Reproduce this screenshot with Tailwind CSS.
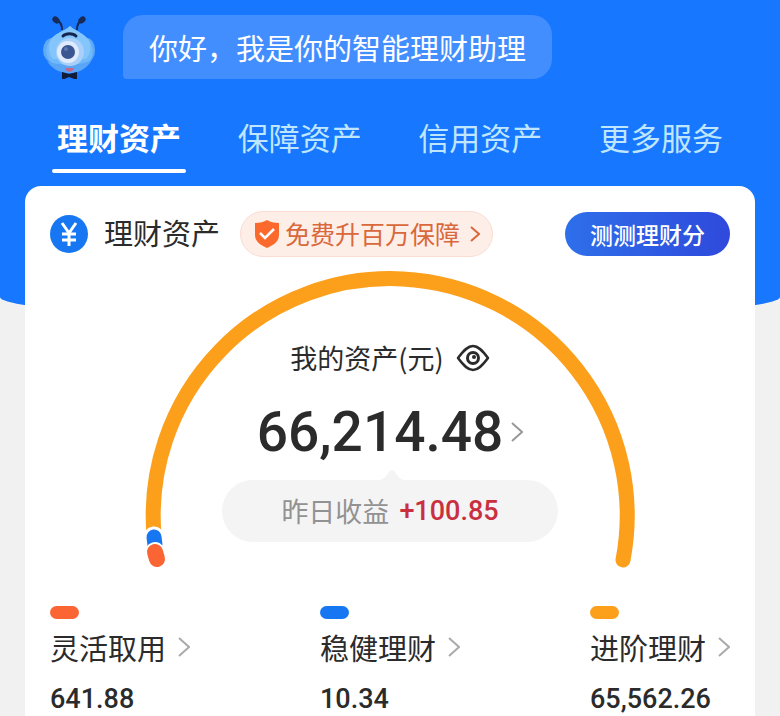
<!DOCTYPE html>
<html lang="zh-CN">
<head>
  <meta charset="UTF-8" />
  <meta name="viewport" content="width=device-width, initial-scale=1.0" />
  <title>理财资产</title>
  <script src="https://cdn.jsdelivr.net/npm/@tailwindcss/browser@4"></script>
</head>
<body class="bg-[#f1f1f1] text-[#2b2b2b] font-['Noto_Sans_CJK_SC',sans-serif]">

  <header class="h-80 bg-[#1777ff] rounded-b-[50%_23px] pt-[15px]">
    <div class="flex items-center pl-[42px] gap-[26px]">
      <!-- assistant mascot -->
      <svg class="w-[55px] h-16 shrink-0" viewBox="0 0 55 64" fill="none">
        <path d="M20 15C20 9 18 6 14 5" stroke="#182a55" stroke-width="2" />
        <path d="M35 15C35 9 37 6 41 5" stroke="#182a55" stroke-width="2" />
        <ellipse cx="14" cy="5" rx="4" ry="3" transform="rotate(40 14 5)" fill="#182a55" />
        <ellipse cx="40" cy="5" rx="4" ry="3" transform="rotate(-40 40 5)" fill="#182a55" />
        <ellipse cx="10" cy="35" rx="9" ry="12" fill="#5fa9f5" />
        <ellipse cx="45" cy="35" rx="8" ry="12" fill="#5fa9f5" />
        <path d="M28 11C33 16 40 17 46 24C54 34 51 45 43 51C34 58 22 58 13 51C4 45 1 34 9 24C15 17 23 16 28 11Z" fill="#6fb8f9" />
        <path d="M28 11C33 16 40 17 46 24C50 30 49 38 44 44H11C6 38 6 30 9 24C15 17 23 16 28 11Z" fill="#84c6fb" />
        <path d="M5 46C16 51 39 51 50 45C43 56 34 58 28 58S12 57 5 46Z" fill="#5aa5f6" />
        <path d="M21 21C24 18 31 18 34 21" stroke="#14264f" stroke-width="3" stroke-linecap="round" />
        <circle cx="28" cy="37" r="14" fill="#a9d0fa" />
        <circle cx="26" cy="37" r="11" fill="#dfebfc" />
        <circle cx="26" cy="37" r="7" fill="#3b5590" />
        <circle cx="24" cy="34" r="2" fill="#5c78b0" />
        <path d="M23 53H32C31 58 24 58 23 53Z" fill="#c7668a" />
        <path d="M20 57L27 59L35 57V65L27 62L20 65Z" fill="#141c35" />
      </svg>
      <p class="h-16 px-[26px] rounded-[20px] rounded-bl-[4px] bg-[#438eff] text-white text-[29px] leading-16 whitespace-nowrap">你好，我是你的智能理财助理</p>
    </div>

    <nav class="flex justify-between px-[52px] mt-[34px] text-[31px] leading-12 text-[#bfe6ff]">
      <a href="#" class="w-[134px] text-center font-bold text-white">理财资产<span class="block h-1 mt-2 rounded-full bg-white"></span></a>
      <a href="#" class="w-[134px] text-center">保障资产</a>
      <a href="#" class="w-[134px] text-center">信用资产</a>
      <a href="#" class="w-[134px] text-center">更多服务</a>
    </nav>
  </header>

  <main class="relative mx-[25px] -mt-[134px] px-[25px] pt-[25px] pb-4 rounded-t-2xl bg-white">
    <div class="flex items-center">
      <svg class="w-[38px] h-[38px]" viewBox="0 0 38 38" fill="none">
        <circle cx="19" cy="19" r="19" fill="#1777f2" />
        <path d="M12 8L19 18L26 8M19 18V31M12 19H26M12 25H26" stroke="#fff" stroke-width="3" />
      </svg>
      <h1 class="ml-4 pb-1 text-[29px] leading-10">理财资产</h1>
      <a href="#" class="flex items-center ml-5 h-[46px] pl-[14px] pr-3 rounded-full border border-[#fbdcd2] bg-[#feeee8] text-[#d9683a] text-[25px]">
        <svg class="w-6 h-7 mr-[6px]" viewBox="0 0 24 28" fill="none">
          <path d="M12 0C15 2 19 3 24 3V15C24 21 19 25 12 28C5 25 0 21 0 15V3C5 3 9 2 12 0Z" fill="#fb6a2c" />
          <path d="M5 13L10 18L19 9" stroke="#fff" stroke-width="2.500" />
        </svg>
        免费升百万保障
        <svg class="w-[10px] h-4 ml-[10px]" viewBox="0 0 10 16" fill="none" stroke="#d9683a" stroke-width="2"><path d="M1 1L9 8L1 15" /></svg>
      </a>
      <button type="button" class="ml-auto h-11 px-[25px] rounded-full bg-linear-to-r from-[#2e6fea] to-[#2f49dc] text-white text-[23px] font-medium">测测理财分</button>
    </div>

    <section class="relative w-[490px] h-[300px] mx-auto mt-[13px] pt-[68px] flex flex-col items-center">
      <!-- share of each asset class along the arc -->
      <svg class="absolute inset-0" viewBox="0 0 490 300" fill="none" stroke-linecap="round">
        <path d="M9 265A237 237 0 1 1 478 290" stroke="#fc9f1b" stroke-width="15" />
        <path d="M9 267L10 275" stroke="#fff" stroke-width="21" />
        <path d="M9 267L10 275" stroke="#1777f2" stroke-width="15" />
        <path d="M10 282L12 289" stroke="#fff" stroke-width="20" />
        <path d="M10 282L12 289" stroke="#fb6534" stroke-width="16" />
      </svg>
      <div class="relative flex items-center gap-3 text-[27px] leading-10">
        我的资产(元)
        <button type="button" aria-label="隐藏金额">
          <svg class="w-[34px] h-7" viewBox="0 0 34 28" fill="none" stroke="#2b2b2b">
            <path d="M2 14C8 6 12 2 17 2S26 6 32 14C26 22 22 26 17 26S8 22 2 14Z" stroke-width="2.500" stroke-linejoin="round" />
            <circle cx="17" cy="14" r="5.500" stroke-width="3" />
            <circle cx="18" cy="13" r="2" fill="#2b2b2b" stroke="none" />
          </svg>
        </button>
      </div>
      <a href="#" class="relative flex items-center gap-2 mt-[14px] text-[55px] leading-[80px] font-medium font-[Roboto,sans-serif]">
        66,214.48
        <svg class="w-3 h-5" viewBox="0 0 12 20" fill="none" stroke="#999" stroke-width="2"><path d="M1 1L11 10L1 19" /></svg>
      </a>
      <div class="relative flex items-center justify-center gap-[10px] w-[336px] h-[62px] mt-2 rounded-full bg-[#f4f4f4] text-[27px] shrink-0">
        <svg class="absolute -top-[10px] left-[158px] w-6 h-[10px]" viewBox="0 0 24 10" fill="#f4f4f4"><path d="M0 10C6 9 9 0 12 0S18 9 24 10Z" /></svg>
        <span class="text-[#929292]">昨日收益</span>
        <span class="text-[#c9303f] font-medium font-[Roboto,sans-serif]">+100.85</span>
      </div>
    </section>

    <ul class="flex justify-between mt-9">
      <li>
        <span class="block w-[29px] h-[13px] rounded-full bg-[#fb6534]"></span>
        <a href="#" class="flex items-center gap-3 mt-[6px] text-[29px] leading-11">灵活取用
          <svg class="w-3 h-5" viewBox="0 0 12 20" fill="none" stroke="#aaa" stroke-width="2"><path d="M1 1L11 10L1 19" /></svg>
        </a>
        <p class="mt-[10px] text-[27px] leading-10 font-medium font-[Roboto,sans-serif]">641.88</p>
      </li>
      <li>
        <span class="block w-[29px] h-[13px] rounded-full bg-[#1777f2]"></span>
        <a href="#" class="flex items-center gap-3 mt-[6px] text-[29px] leading-11">稳健理财
          <svg class="w-3 h-5" viewBox="0 0 12 20" fill="none" stroke="#aaa" stroke-width="2"><path d="M1 1L11 10L1 19" /></svg>
        </a>
        <p class="mt-[10px] text-[27px] leading-10 font-medium font-[Roboto,sans-serif]">10.34</p>
      </li>
      <li>
        <span class="block w-[29px] h-[13px] rounded-full bg-[#fc9f1b]"></span>
        <a href="#" class="flex items-center gap-3 mt-[6px] text-[29px] leading-11">进阶理财
          <svg class="w-3 h-5" viewBox="0 0 12 20" fill="none" stroke="#aaa" stroke-width="2"><path d="M1 1L11 10L1 19" /></svg>
        </a>
        <p class="mt-[10px] text-[27px] leading-10 font-medium font-[Roboto,sans-serif]">65,562.26</p>
      </li>
    </ul>
  </main>

</body>
</html>
